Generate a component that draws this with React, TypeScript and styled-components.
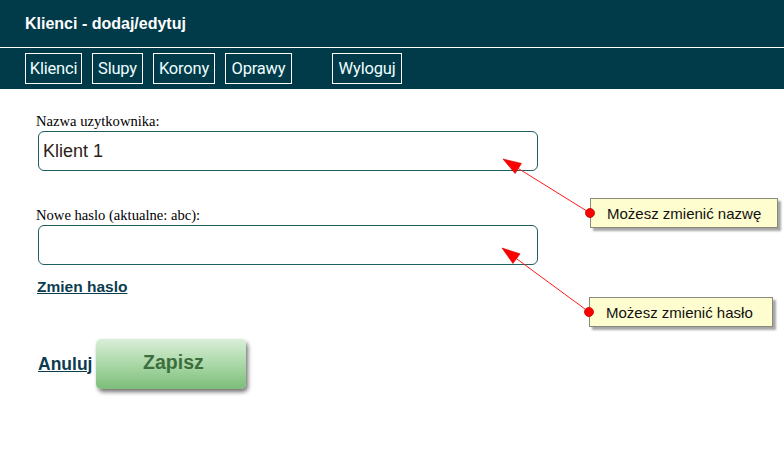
import React from 'react'
import styled, { createGlobalStyle } from 'styled-components'

const GlobalStyle = createGlobalStyle`
  html, body {
    margin: 0;
    padding: 0;
    background: #fff;
  }
  body {
    font-family: "Liberation Sans", Arial, sans-serif;
  }
`

const Page = styled.div`
  position: relative;
  width: 784px;
  height: 461px;
  overflow: hidden;
`

const Header = styled.header`
  background-color: #013b4a;
`

const TitleBar = styled.div`
  height: 47px;
  padding-left: 25px;
  display: flex;
  align-items: center;
  border-bottom: 1px solid #fff;
  color: #fff;
  font-weight: 700;
  font-size: 16px;
`

const Nav = styled.nav`
  height: 41px;
  padding: 5px 0 0 25px;
  box-sizing: border-box;
  display: flex;
  align-items: flex-start;
  gap: 10px;
`

const NavItem = styled.a<{ $w: number; $gap?: number }>`
  display: block;
  width: ${({ $w }) => $w}px;
  height: 31px;
  line-height: 29px;
  box-sizing: border-box;
  border: 1px solid #fff;
  text-align: center;
  color: #effeff;
  font-family: Roboto, "Liberation Sans", sans-serif;
  font-size: 16.5px;
  letter-spacing: -0.2px;
  text-decoration: none;
  white-space: nowrap;
  margin-left: ${({ $gap }) => ($gap ? `${$gap}px` : '0')};
`

const Form = styled.main`
  padding: 23px 0 0 38px;
`

const Label = styled.label<{ $first?: boolean }>`
  display: block;
  margin-top: ${({ $first }) => ($first ? '0' : '35px')};
  margin-bottom: 1px;
  margin-left: -2px;
  font-family: "Liberation Serif", "Times New Roman", serif;
  font-size: 14.6px;
  line-height: 18px;
  color: #000;
`

const Input = styled.input`
  display: block;
  width: 500px;
  height: 40px;
  box-sizing: border-box;
  border: 1px solid #1e5f60;
  border-radius: 6px;
  padding: 0 4px;
  font-family: "Liberation Sans", Arial, sans-serif;
  font-size: 18px;
  color: #2a2218;
  outline: none;
`

const TextLink = styled.a<{ $size: number }>`
  color: #0b3c4f;
  font-weight: 700;
  font-size: ${({ $size }) => $size}px;
  text-decoration: underline;
  cursor: pointer;
`

const ChangeRow = styled.div`
  margin-top: 13px;
  margin-left: -1px;
  line-height: 18px;
`

const Actions = styled.div`
  margin-top: 43px;
  display: flex;
  align-items: center;
  gap: 4px;
`

const SaveButton = styled.button`
  width: 150px;
  height: 50px;
  border: none;
  border-radius: 5px;
  background: linear-gradient(to bottom, #d9eed7 0%, #a6d6a3 55%, #7cbd79 100%);
  box-shadow: 2px 3px 4px rgba(0, 0, 0, 0.55);
  color: #3c6e3e;
  font-family: "Liberation Sans", Arial, sans-serif;
  font-weight: 700;
  font-size: 19.5px;
  padding: 0 0 4px 4px;
  cursor: pointer;
`

const Hint = styled.div<{ $left: number; $top: number; $width: number }>`
  position: absolute;
  left: ${({ $left }) => $left}px;
  top: ${({ $top }) => $top}px;
  width: ${({ $width }) => $width}px;
  height: 30px;
  box-sizing: border-box;
  padding-left: 16px;
  display: flex;
  align-items: center;
  background: #fefdd0;
  border: 1px solid #8a8a7a;
  box-shadow: 3px 3px 2px rgba(0, 0, 0, 0.35);
  font-size: 15px;
  color: #111;
`

const Pointers = styled.svg`
  position: absolute;
  left: 0;
  top: 0;
  pointer-events: none;
`

function Pointer({ from, to }: { from: [number, number]; to: [number, number] }) {
  const [fx, fy] = from
  const [tx, ty] = to
  const len = Math.hypot(fx - tx, fy - ty)
  const ux = (tx - fx) / len
  const uy = (ty - fy) / len
  const bx = tx - ux * 18
  const by = ty - uy * 18
  const nx = -uy * 6
  const ny = ux * 6
  const head = `${tx},${ty} ${bx + nx},${by + ny} ${bx - nx},${by - ny}`
  return (
    <g>
      <line x1={fx} y1={fy} x2={bx} y2={by} stroke="#ff1a1a" strokeWidth="1" />
      <polygon points={head} fill="#f00" stroke="#c00" strokeWidth="0.6" />
      <circle cx={fx} cy={fy} r="4.5" fill="#f00" stroke="#b00" strokeWidth="0.8" />
    </g>
  )
}

const navLinks = [
  { label: 'Klienci', w: 57 },
  { label: 'Slupy', w: 51 },
  { label: 'Korony', w: 62 },
  { label: 'Oprawy', w: 67 },
  { label: 'Wyloguj', w: 70, gap: 30 },
]

export default function App() {
  return (
    <Page>
      <GlobalStyle />
      <Header>
        <TitleBar>Klienci - dodaj/edytuj</TitleBar>
        <Nav>
          {navLinks.map((l) => (
            <NavItem key={l.label} $w={l.w} $gap={l.gap}>
              {l.label}
            </NavItem>
          ))}
        </Nav>
      </Header>

      <Form>
        <Label $first>Nazwa uzytkownika:</Label>
        <Input defaultValue="Klient 1" />
        <Label>Nowe haslo (aktualne: abc):</Label>
        <Input type="password" />
        <ChangeRow>
          <TextLink $size={15.5}>Zmien haslo</TextLink>
        </ChangeRow>
        <Actions>
          <TextLink $size={17.5}>Anuluj</TextLink>
          <SaveButton>Zapisz</SaveButton>
        </Actions>
      </Form>

      <Hint $left={590} $top={198} $width={188}>Możesz zmienić nazwę</Hint>
      <Hint $left={589} $top={297} $width={184}>Możesz zmienić hasło</Hint>

      <Pointers width="784" height="461">
        <Pointer from={[590, 213]} to={[503, 159]} />
        <Pointer from={[589, 312]} to={[502, 248]} />
      </Pointers>
    </Page>
  )
}
